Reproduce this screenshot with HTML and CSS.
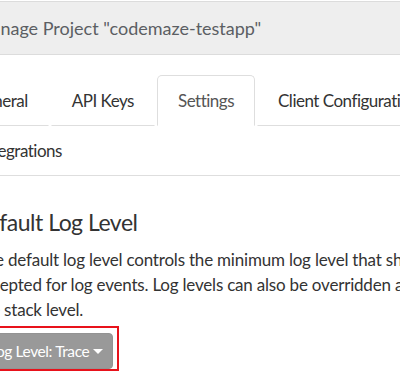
FILE: index.html
```html
<!DOCTYPE html>
<html lang="en">
<head>
<meta charset="utf-8">
<title>Manage Project</title>
<link rel="stylesheet" href="styles.css">
</head>
<body>
<div class="page">
  <header class="page-header">
    <h1 class="page-title">Manage Project "codemaze-testapp"</h1>
  </header>
  <ul class="tabs">
    <li class="tab"><a href="#">General</a></li>
    <li class="tab"><a href="#">API Keys</a></li>
    <li class="tab active"><a href="#">Settings</a></li>
    <li class="tab"><a href="#">Client Configuration</a></li>
    <li class="tab tab-break"><a href="#">Integrations</a></li>
  </ul>
  <section class="content">
    <h2 class="section-title">Default Log Level</h2>
    <p class="section-text">The default log level controls the minimum log level that should be<br>accepted for log events. Log levels can also be overridden at<br>the stack level.</p>
    <div class="highlight">
      <button class="btn-dropdown" type="button">Log Level: Trace <span class="caret"></span></button>
    </div>
  </section>
</div>
</body>
</html>
```
FILE: styles.css
```css
html, body {
  margin: 0;
  padding: 0;
  background: #fff;
  overflow: hidden;
}
body {
  font-family: Lato, "Open Sans", sans-serif;
  color: #333;
}
.page {
  width: 460px;
  padding-top: 1px;
}
.page-header {
  background: #eeeeee;
  border-top: 1px solid #dcdcdc;
  border-bottom: 1px solid #dcdcdc;
  height: 52px;
  display: flex;
  align-items: center;
  margin-left: -25px;
}
.page-title {
  margin: 0;
  font-size: 18px;
  font-weight: 400;
  color: #5b5e63;
  white-space: nowrap;
}
.tabs {
  list-style: none;
  margin: 20px 0 0 -48px;
  padding: 0;
  display: flex;
  flex-wrap: wrap;
  border-bottom: 1px solid #dedede;
  width: 800px;
}
.tab {
  margin-right: 2px;
  margin-bottom: -1px;
}
.tab a {
  display: block;
  height: 49px;
  line-height: 49px;
  padding: 0 20px;
  border: 1px solid transparent;
  border-bottom-color: #dedede;
  border-radius: 5px 5px 0 0;
  font-size: 17px;
  letter-spacing: -0.5px;
  color: #333;
  text-decoration: none;
  white-space: nowrap;
}
.tab.active a {
  border-color: #dedede;
  border-bottom-color: transparent;
  color: #555;
}
.tab-break {
  flex-basis: 100%;
  padding-left: 6px;
}
.tab-break a {
  display: inline-block;
}
.content {
  margin-left: -24px;
}
.section-title {
  margin: 31px 0 0 -5px;
  font-size: 23px;
  font-weight: 400;
  letter-spacing: -0.5px;
  line-height: 30px;
  color: #333;
}
.section-text {
  margin: 10px 0 0;
  font-size: 17px;
  letter-spacing: -0.2px;
  line-height: 25px;
  color: #333;
  white-space: nowrap;
}
.highlight {
  display: inline-block;
  border: 2px solid #e8121b;
  padding: 5px 4px 0 6px;
  margin: 4px 0 0 -10px;
}
.btn-dropdown {
  display: flex;
  align-items: center;
  gap: 4px;
  height: 36px;
  padding: 0 9px 0 14px;
  background: #999999;
  border: 1px solid #939393;
  border-radius: 4px;
  color: #fff;
  font-family: inherit;
  font-size: 15.5px;
  letter-spacing: -0.4px;
}
.caret {
  width: 0;
  height: 0;
  border-left: 5px solid transparent;
  border-right: 5px solid transparent;
  border-top: 5px solid #fff;
}
```
